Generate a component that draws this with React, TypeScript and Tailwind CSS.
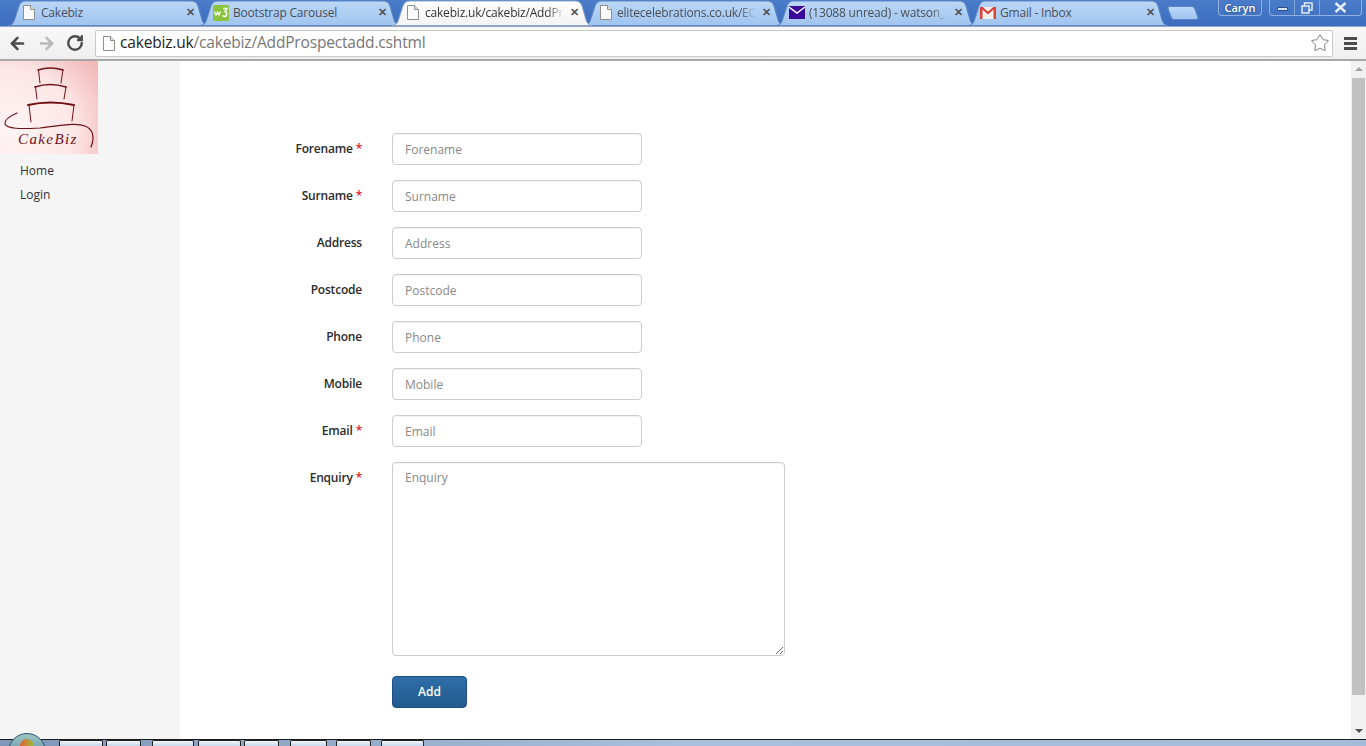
import { ArrowLeft, ArrowRight, RotateCw, Star } from "lucide-react";
import type { ReactNode } from "react";

const PageIcon = () => (
  <svg width="12" height="15" viewBox="0 0 12 15" className="shrink-0">
    <path d="M.5.5h7l4 4v10H.5z" fill="#fbfbfb" stroke="#8f8f8f" />
    <path d="M7.5.5v4h4" fill="#e6e6e6" stroke="#8f8f8f" />
  </svg>
);

const W3Icon = () => (
  <svg width="16" height="16" viewBox="0 0 16 16" className="shrink-0">
    <rect width="16" height="16" rx="1.5" fill="#8ac43f" />
    <path d="M1.500 6.500l1.500 3.500 1.500-3 1.500 3 1.500-3.500" fill="none" stroke="#fff" strokeWidth="1.2" />
    <path d="M10 3.500h4l-2 3c2 0 2.500 5-.5 5-1 0-1.500-.5-2-1" fill="none" stroke="#fff" strokeWidth="1.4" />
  </svg>
);

const MailIcon = () => (
  <svg width="16" height="13" viewBox="0 0 16 13" className="shrink-0">
    <rect width="16" height="13" fill="#3b0a9c" />
    <path d="M0 1l8 6 8-6" fill="none" stroke="#fff" strokeWidth="1.4" />
  </svg>
);

const GmailIcon = () => (
  <svg width="16" height="12" viewBox="0 0 16 12" className="shrink-0">
    <rect width="16" height="12" fill="#f4f0ee" />
    <path d="M0 0h2.500v12H0zM13.500 0H16v12h-2.500z" fill="#d9423a" />
    <path d="M1 0l7 6 7-6" fill="none" stroke="#d9423a" strokeWidth="2.200" />
  </svg>
);

const tabs: { icon: ReactNode; title: string; active?: boolean; textGap: string; iconPad: string; fade?: boolean }[] = [
  { icon: <PageIcon />, title: "Cakebiz", iconPad: "pl-[15px]", textGap: "ml-[6px]" },
  { icon: <W3Icon />, title: "Bootstrap Carousel", iconPad: "pl-[13px]", textGap: "ml-[4px]" },
  { icon: <PageIcon />, title: "cakebiz.uk/cakebiz/AddPr", active: true, iconPad: "pl-[15px]", textGap: "ml-[6px]", fade: true },
  { icon: <PageIcon />, title: "elitecelebrations.co.uk/EC", iconPad: "pl-[16px]", textGap: "ml-[5px]", fade: true },
  { icon: <MailIcon />, title: "(13088 unread) - watson_", iconPad: "pl-[13px]", textGap: "ml-[4px]", fade: true },
  { icon: <GmailIcon />, title: "Gmail - Inbox", iconPad: "pl-[12px]", textGap: "ml-[4px]" },
];

const Tab = ({ icon, title, active, iconPad, textGap, fade }: (typeof tabs)[number]) => (
  <div className={`relative w-[200px] h-[25px] -mr-[8px] shrink-0 ${active ? "z-10" : ""}`}>
    <svg width="200" height="26" viewBox="0 0 200 26" className="absolute left-0 top-0">
      <defs>
        <linearGradient id={active ? "tabOn" : "tabOff"} x1="0" y1="0" x2="0" y2="1">
          <stop offset="0" stopColor={active ? "#ffffff" : "#bcd7f6"} />
          <stop offset="1" stopColor={active ? "#f3f3f3" : "#9fc4ef"} />
        </linearGradient>
      </defs>
      <path
        d="M0 25.500C4 25.500 5.500 23 6.500 20L11 6C12 3 14 1 18 1H183C187 1 189 3 190 6L194 20C195 23 197 25.500 200 25.500Z"
        fill={`url(#${active ? "tabOn" : "tabOff"})`}
        stroke={active ? "#8fa6c6" : "#5d86c2"}
      />
    </svg>
    <div className={`relative flex items-center h-[25px] pr-[13px] ${iconPad}`}>
      {icon}
      <span
        className={`${textGap} w-0 flex-1 whitespace-nowrap overflow-hidden text-[12px] tracking-[-0.2px] ${active ? "text-[#333]" : "text-[#4a4f57]"} ${fade ? "[mask-image:linear-gradient(to_right,black_88%,transparent)]" : ""}`}
      >
        {title}
      </span>
      <span className="ml-[6px] text-[11px] font-bold text-[#555]">✕</span>
    </div>
  </div>
);

const fields = [
  { name: "Forename", required: true },
  { name: "Surname", required: true },
  { name: "Address" },
  { name: "Postcode" },
  { name: "Phone" },
  { name: "Mobile" },
  { name: "Email", required: true },
];

const FieldLabel = ({ name, required }: { name: string; required?: boolean }) => (
  <label className="w-[182px] -mt-[1px] text-right text-[12px] tracking-[-0.2px] font-semibold text-[#2b2b2b] shrink-0 mr-[30px]">
    {name}
    {required && <span className="ml-[3px] text-[#d9232e]">*</span>}
  </label>
);

const CakeLogo = () => (
  <svg width="98" height="93" viewBox="0 0 98 93" className="block">
    <defs>
      <radialGradient id="logoBg" cx="0.1" cy="0.75" r="1.1">
        <stop offset="0" stopColor="#fff4f4" />
        <stop offset="0.6" stopColor="#fde6e6" />
        <stop offset="1" stopColor="#f2b9b9" />
      </radialGradient>
    </defs>
    <rect width="98" height="93" fill="url(#logoBg)" />
    <g fill="none" stroke="#6e1218" strokeLinecap="round">
      <path d="M38 9Q50 5 63 9" strokeWidth="1.500" />
      <path d="M38.500 9L40 22M63 9L61 22" strokeWidth="1" />
      <path d="M35 26Q50 21 66 26" strokeWidth="1.500" />
      <path d="M35.500 26L37 38M66 26L64 38" strokeWidth="1" />
      <path d="M28 44Q50 39 74 44" strokeWidth="1.800" />
      <path d="M29 44L31 61M74 44L72 60" strokeWidth="1" />
      <path d="M17 52C10 55 4 59 5 63C7 68 20 68 40 67C60 65 75 61 85 65C93 68 95 76 91 86" strokeWidth="1.200" />
    </g>
    <text x="18" y="83" fontFamily="'Liberation Serif', serif" fontStyle="italic" fontSize="15" letterSpacing="1.400" fill="#6e1218">
      CakeBiz
    </text>
  </svg>
);

export default function App() {
  return (
    <div className="flex flex-col w-full h-[746px] overflow-hidden bg-white font-['Open_Sans',sans-serif]">
      {/* browser chrome */}
      <header className="shrink-0">
        <div className="flex h-[26px] pl-[8px] bg-gradient-to-b from-[#4a7cca] to-[#3d6dbd] overflow-hidden">
          <div className="flex">
            {tabs.map((tab) => (
              <Tab key={tab.title} {...tab} />
            ))}
          </div>
          <div className="shrink-0 ml-[9px] mt-[6px] w-[28px] h-[14px] rounded-[3px] skew-x-[20deg] bg-gradient-to-b from-[#bcd7f6] to-[#9fc4ef] border border-[#5d86c2]" />
          <div className="ml-auto flex items-start pr-[4px]">
            <div className="w-[44px] h-[16px] mr-[7px] flex items-center justify-center rounded-b-[4px] border border-t-0 border-[#8fb0e0] text-[11px] leading-[14px] font-semibold text-white [text-shadow:0_0_2px_#1d3d75]">
              Caryn
            </div>
            <div className="flex h-[16px] rounded-b-[4px] border border-t-0 border-[#8fb0e0]">
              <div className="w-[25px] flex items-center justify-center border-r border-[#7fa2d8]">
                <span className="block w-[11px] h-[4px] mt-[3px] rounded-[1px] bg-[#d8e4f5] border border-[#2c4c85]" />
              </div>
              <div className="w-[25px] flex items-center justify-center border-r border-[#7fa2d8]">
                <svg width="12" height="12" viewBox="0 0 12 12" fill="none" stroke="#e4ecf8" strokeWidth="1.500">
                  <rect x="3.500" y="1" width="7.500" height="7" />
                  <rect x="1" y="4" width="7" height="7" fill="#4f7ecb" />
                </svg>
              </div>
              <div className="w-[41px] flex items-center justify-center">
                <svg width="13" height="11" viewBox="0 0 13 11" fill="none" stroke="#e4ecf8" strokeWidth="2.400">
                  <path d="M1.500 1l10 9M11.500 1l-10 9" />
                </svg>
              </div>
            </div>
          </div>
        </div>
        <div className="flex items-center h-[35px] border-t border-[#8fa6c6] border-b-2 border-b-[#a8a8a8] bg-gradient-to-b from-[#f8f8f8] to-[#efefef]">
          <div className="flex items-center gap-[10px] pl-[8px] w-[95px]">
            <ArrowLeft size={19} strokeWidth={3.2} className="text-[#4b4b4b]" />
            <ArrowRight size={19} strokeWidth={3.2} className="text-[#b9b9b9]" />
            <RotateCw size={18} strokeWidth={3.2} className="text-[#4b4b4b]" />
          </div>
          <div className="flex items-center flex-1 h-[27px] pl-[7px] pr-[2px] bg-white border border-[#c9c9c9] rounded-[2px]">
            <PageIcon />
            <span className="ml-[5px] text-[15.5px] tracking-[-0.17px] text-[#222]">cakebiz.uk</span>
            <span className="text-[15.5px] tracking-[-0.17px] text-[#777]">/cakebiz/AddProspectadd.cshtml</span>
            <Star size={20} strokeWidth={1} className="ml-auto text-[#666]" />
          </div>
          <div className="flex flex-col gap-[2px] ml-[11px] mr-[9px] w-[13px] shrink-0">
            <span className="h-[3px] bg-[#4b4b4b]" />
            <span className="h-[3px] bg-[#4b4b4b]" />
            <span className="h-[3px] bg-[#4b4b4b]" />
          </div>
        </div>
      </header>

      {/* page */}
      <div className="flex flex-1 min-h-0">
        <aside className="w-[180px] shrink-0 bg-[#f5f5f5]">
          <CakeLogo />
          <nav className="flex flex-col gap-[6px] pt-[8px] pl-[20px] text-[12px] text-[#333]">
            <a className="h-[18px] leading-[18px]">Home</a>
            <a className="h-[18px] leading-[18px]">Login</a>
          </nav>
        </aside>
        <main className="flex-1 pt-[72px]">
          <form className="flex flex-col gap-[15px]">
            {fields.map((f) => (
              <div key={f.name} className="flex items-center h-[32px]">
                <FieldLabel {...f} />
                <input
                  placeholder={f.name}
                  className="w-[250px] h-[32px] px-[12px] text-[12px] bg-white border border-[#ccc] rounded-[4px] shadow-[inset_0_1px_1px_rgba(0,0,0,0.05)] placeholder:text-[#888]"
                />
              </div>
            ))}
            <div className="flex items-start">
              <div className="flex items-center h-[32px]">
                <FieldLabel name="Enquiry" required />
              </div>
              <textarea
                placeholder="Enquiry"
                className="block w-[393px] h-[194px] px-[12px] py-[6px] text-[12px] bg-white border border-[#ccc] rounded-[4px] shadow-[inset_0_1px_1px_rgba(0,0,0,0.05)] placeholder:text-[#888]"
              />
            </div>
            <div className="pl-[212px] pt-[5px]">
              <button
                type="button"
                className="w-[75px] h-[32px] text-[12px] font-semibold text-white rounded-[4px] border border-[#1f4f80] bg-gradient-to-b from-[#2f6fa9] to-[#235a8e]"
              >
                Add
              </button>
            </div>
          </form>
        </main>
        <div className="flex flex-col items-center w-[15px] shrink-0 bg-[#f1f1f1]">
          <span className="mt-[6px] w-0 h-0 border-x-[4px] border-x-transparent border-b-[4px] border-b-[#a3a3a3]" />
          <div className="w-[13px] h-[617px] mt-[7px] bg-[#c1c1c1]" />
          <span className="mt-auto mb-[6px] w-0 h-0 border-x-[4px] border-x-transparent border-t-[4px] border-t-[#505050]" />
        </div>
      </div>

      {/* windows taskbar, cut off by the bottom of the screen */}
      <footer className="flex shrink-0 h-[7px] border-t border-[#1a1a1a] bg-gradient-to-r from-[#7f98b8] via-[#a9c0dc] to-[#a4bcd9]">
        <div className="relative z-10 w-[59px] shrink-0 pl-[8px]">
          <div className="w-[38px] h-[38px] rounded-full -mt-[7px] border border-[#2c4f72] bg-gradient-to-b from-[#9fc6c0] to-[#3a6f9d] flex justify-center pt-[5px]">
            <span className="w-[14px] h-[8px] rounded-t-full bg-gradient-to-r from-[#e2572f] to-[#8dbb3f]" />
          </div>
        </div>
        {[
          "w-[44px] mr-[3px]",
          "w-[35px] mr-[11px]",
          "w-[42px] mr-[4px]",
          "w-[43px] mr-[3px]",
          "w-[35px] mr-[11px]",
          "w-[37px] mr-[9px]",
          "w-[35px] mr-[10px]",
          "w-[43px]",
        ].map((size, i) => (
          <div
            key={i}
            className={`shrink-0 rounded-t-[2px] border border-b-0 border-[#222] bg-gradient-to-b from-[#f4f7fb] to-[#c6d6ea] ${size}`}
          />
        ))}
      </footer>
    </div>
  );
}
